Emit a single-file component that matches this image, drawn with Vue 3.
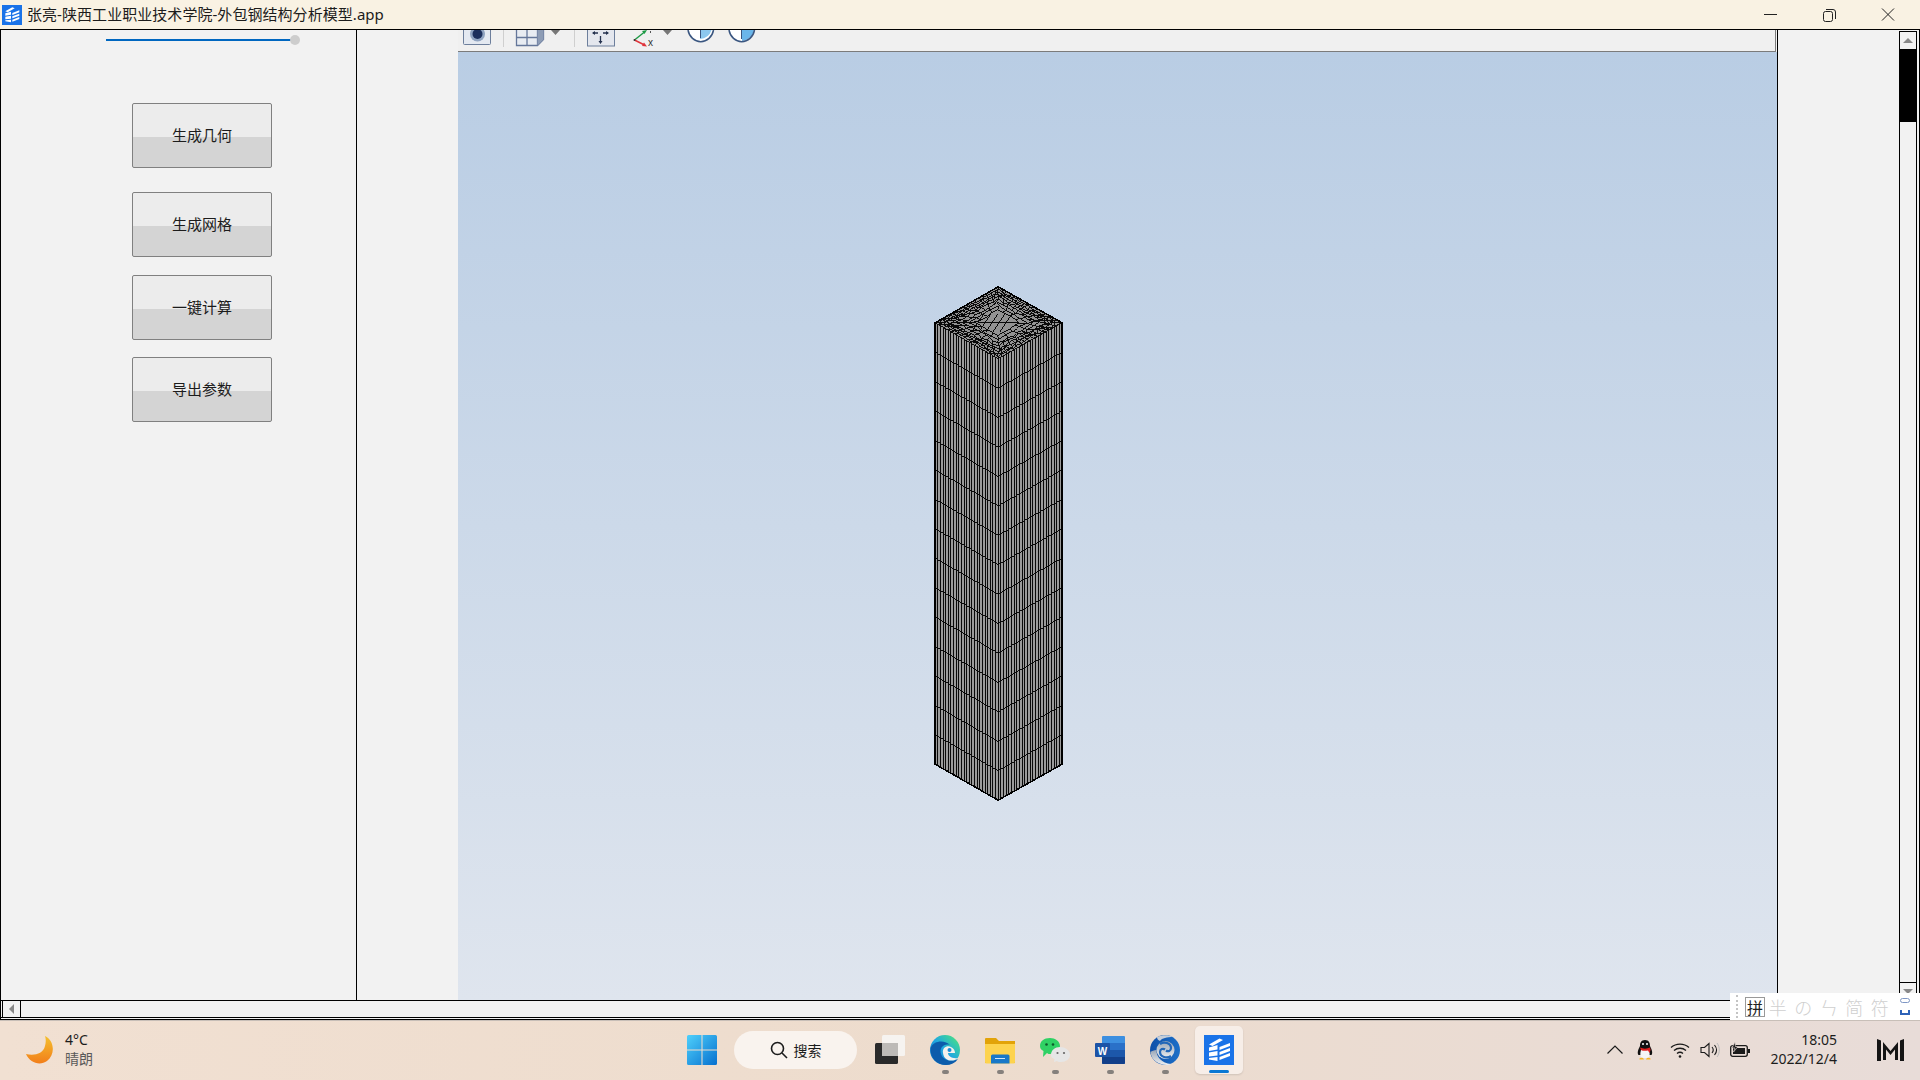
<template>
  <div class="app">
    <div class="titlebar">
      <svg class="title-icon" viewBox="0 0 30 30">
        <rect width="30" height="30" fill="#1a73e8" />
        <path v-for="d in shelfPaths" :key="d" :d="d" fill="#fff" />
      </svg>
      <span class="title-text">张亮-陕西工业职业技术学院-外包钢结构分析模型.app</span>
      <div class="win-controls">
        <svg viewBox="0 0 58 16"><path d="M22 7.5h13" stroke="#222" fill="none" /></svg>
        <svg viewBox="0 0 58 16">
          <rect x="22.5" y="4.5" width="9" height="10" rx="2" stroke="#222" fill="none" />
          <path d="M25 2.5h7a2.500 2.500 0 0 1 2.500 2.500v7" stroke="#222" fill="none" />
        </svg>
        <svg viewBox="0 0 58 16"><path d="M22 1.500l12 12M34 1.500l-12 12" stroke="#222" fill="none" /></svg>
      </div>
    </div>

    <div class="window">
      <div class="client">
        <aside class="side">
          <div class="slider"><span class="slider-line"></span><span class="slider-thumb"></span></div>
          <button v-for="b in buttons" :key="b" class="cmd">{{ b }}</button>
        </aside>

        <main class="viewer">
          <div class="toolbar">
            <svg class="toolbar-icons" viewBox="458 30 1317 21">
              <rect x="463.500" y="24" width="27" height="20.500" rx="1" fill="#e4e9f1" stroke="#6d7f9c" />
              <circle cx="477.500" cy="34" r="7.500" fill="#8fa3c0" />
              <circle cx="477.500" cy="34" r="5" fill="#1c2f5c" />
              <path d="M503.500 30v17M574.500 30v17" stroke="#cfcfcf" />
              <path d="M516.500 30v15.500h21l6-6v-10M516.500 37.500h21M527 30v15.500M537.500 30v15.500" fill="#e8ecf2" stroke="#65779a" stroke-width="1.300" />
              <path d="M537.500 45.500l6-6v-10h-6z" fill="#8d9cb5" />
              <path d="M551 30h9l-4.500 5zM663 30h9l-4.500 5z" fill="#777" />
              <rect x="587.500" y="24" width="27" height="22" fill="#e4e7ee" stroke="#6d7f9c" />
              <path d="M593 33h5M603 33h5M600.500 36v5" stroke="#24324f" stroke-width="1.300" />
              <path d="M592 33l3-2v4zM609 33l-3-2v4zM600.500 44l-2-3h4z" fill="#24324f" />
              <path d="M634.500 40l10-8" stroke="#1c9a45" stroke-width="1.500" />
              <path d="M647 30l-5 1 2.500 3z" fill="#1c9a45" />
              <path d="M634.500 40l10 5" stroke="#e0333a" stroke-width="1.500" />
              <path d="M647 46.500l-5-.5 2-3.500z" fill="#e0333a" />
              <circle cx="634.500" cy="40" r="1" fill="#333" />
              <text x="648" y="46" class="axis">x</text>
              <rect x="650" y="31" width="1" height="2" fill="#555" />
              <path d="M688 30a13 14.500 0 0 0 25.500 0z" fill="#fff" />
              <path d="M700 30h11.500a13 13 0 0 1-11.500 9z" fill="#8cc8ef" />
              <path d="M688 30a13 14.500 0 0 0 25.500 0" fill="none" stroke="#3a5680" stroke-width="1.500" />
              <path d="M700.500 30v8" stroke="#3a5680" />
              <path d="M729 30a13 14.500 0 0 0 25.500 0z" fill="#fff" />
              <path d="M742 30h12a13 13 0 0 1-12 11z" fill="#6ab6ea" />
              <path d="M729 30a13 14.500 0 0 0 25.500 0" fill="none" stroke="#3a5680" stroke-width="1.500" />
              <path d="M741.500 30v9" stroke="#3a5680" />
            </svg>
          </div>
          <svg class="scene" viewBox="458 51 1319 949" shape-rendering="crispEdges">
            <path d="M998 286L1062 322V764L998 800L935 764V322Z" fill="#9b9b9b" />
            <path d="M998 286L1062 322L998 358L935 322Z" fill="#939393" />
            <path :d="towerColumns" fill="none" stroke="#0a0a0a" stroke-width="1" />
            <path :d="towerBands" fill="none" stroke="#0a0a0a" stroke-width="1" />
            <path :d="topMesh" fill="none" stroke="#0a0a0a" stroke-width="1" />
            <path d="M998 286L1062 322V764L998 800L935 764V322Z" fill="none" stroke="#000" stroke-width="1.500" />
          </svg>
        </main>

        <div class="right-pane"></div>

        <div class="vscroll">
          <div class="vbtn"><span class="arrow-up"></span></div>
          <div class="vthumb"></div>
          <div class="vtrack"></div>
          <div class="vbtn vbtn-end"><span class="arrow-down"></span></div>
        </div>
      </div>

      <div class="hbar">
        <div class="hbtn"><span class="arrow-left"></span></div>
      </div>
    </div>

    <footer class="taskbar">
      <div class="weather">
        <svg class="moon" viewBox="0 0 28 28">
          <defs>
            <linearGradient id="moonGrad" x1="0" y1="0" x2="0" y2="1">
              <stop offset="0" stop-color="#f4c02e" />
              <stop offset="1" stop-color="#f27e1a" />
            </linearGradient>
          </defs>
          <path d="M19 0C28 4 30 18 21 25C14 30 4 27 0 18C8 20 17 18 19 10C20 6 20 3 19 0Z" fill="url(#moonGrad)" />
        </svg>
        <div class="weather-text">
          <div class="temp">4°C</div>
          <div class="sky">晴朗</div>
        </div>
      </div>

      <div class="task-group">
        <div class="task">
          <svg class="ico" viewBox="0 0 29 29">
            <defs>
              <linearGradient id="winGrad" x1="0" y1="0" x2="1" y2="1">
                <stop offset="0" stop-color="#4fd0fb" />
                <stop offset="1" stop-color="#0670cf" />
              </linearGradient>
            </defs>
            <path d="M0 1.500a1.500 1.500 0 0 1 1.500-1.500H14V14H0ZM15 0H27.500A1.500 1.500 0 0 1 29 1.500V14H15ZM0 15H14V29H1.500A1.500 1.500 0 0 1 0 27.500ZM15 15H29V27.500A1.500 1.500 0 0 1 27.500 29H15Z" fill="url(#winGrad)" />
          </svg>
        </div>
        <div class="search">
          <svg class="search-ico" viewBox="0 0 18 18">
            <circle cx="7.500" cy="7.500" r="6" fill="none" stroke="#1c1c1c" stroke-width="1.600" />
            <path d="M12 12l5 5" stroke="#1c1c1c" stroke-width="1.600" />
          </svg>
          <span>搜索</span>
        </div>
        <div class="task">
          <svg class="ico" viewBox="0 0 30 30">
            <rect x="0" y="8" width="23" height="21" rx="1.500" fill="#2a2a2a" />
            <rect x="7" y="0" width="23" height="21" rx="1.500" fill="#f6f3f0" />
            <rect x="7" y="8" width="16" height="13" fill="#bdbab7" />
          </svg>
        </div>
        <div class="task">
          <svg class="ico" viewBox="0 0 30 30">
            <defs>
              <linearGradient id="edgeGrad" x1="0" y1="1" x2="1" y2="0">
                <stop offset="0" stop-color="#0b6ec4" />
                <stop offset=".5" stop-color="#21a8e0" />
                <stop offset=".8" stop-color="#3cd1a0" />
                <stop offset="1" stop-color="#74de5a" />
              </linearGradient>
            </defs>
            <circle cx="15" cy="15" r="15" fill="url(#edgeGrad)" />
            <path d="M.5 13C0 24 8 30 16 30C21 30 25 28 28 24C22 27 13 26 11 19C9 13 14 8 20 10C15 5 4 5 .5 13Z" fill="#0c5cab" />
            <path d="M13 18C12 13 17 10 21 12C24 13.500 25 16 25 18L18 18C18 21 22 24 28 23C24 27 14 27 13 18Z" fill="#f4f1ed" />
            <circle cx="19.500" cy="15" r="2" fill="#1b8cd6" />
          </svg>
        </div>
        <div class="task">
          <svg class="ico" viewBox="0 0 30 28">
            <path d="M0 3a1 1 0 0 1 1-1H11L14 5H30V27H0Z" fill="#e2a309" />
            <path d="M0 8H30V26a1.500 1.500 0 0 1-1.500 1.500H1.500A1.500 1.500 0 0 1 0 26Z" fill="#fdd34e" />
            <path d="M6 20a1.500 1.500 0 0 1 1.500-1.500H23a1.500 1.500 0 0 1 1.500 1.500V27.500H6Z" fill="#1878c8" />
            <path d="M10 22.500H20" stroke="#cfe6f8" />
          </svg>
        </div>
        <div class="task">
          <svg class="ico" viewBox="0 0 30 26">
            <path d="M0 9C0 4 4 1 10 1C15 1 20 4 20 9C20 14 15 17 10 17C9 17 8 17 7 16L3 20L3.500 14C1 13 0 11 0 9Z" fill="#2fd164" />
            <circle cx="6.500" cy="7.500" r="1.300" fill="#0d5a2b" />
            <circle cx="13" cy="7.500" r="1.300" fill="#0d5a2b" />
            <path d="M11 18C11 13 15 10 20 10C25 10 30 13 30 18C30 22 26 25 21 25C19 25 18 25 17 24L14 25L14.500 22C12 21 11 20 11 18Z" fill="#e6e6e6" />
            <circle cx="17.500" cy="16" r="1.100" fill="#666" />
            <circle cx="24" cy="16" r="1.100" fill="#666" />
          </svg>
        </div>
        <div class="task">
          <svg class="ico" viewBox="0 0 30 28">
            <rect x="7" y="0" width="23" height="28" rx="1" fill="#3d8fe0" />
            <rect x="7" y="7" width="23" height="7" fill="#2a70c8" />
            <rect x="7" y="14" width="23" height="7" fill="#1c57aa" />
            <path d="M7 21H30V27a1 1 0 0 1-1 1H8a1 1 0 0 1-1-1Z" fill="#123f8a" />
            <rect x="0" y="7" width="15" height="14" rx="1" fill="#1c53a6" />
            <text x="7.500" y="18.500" class="word-w">W</text>
          </svg>
        </div>
        <div class="task">
          <svg class="ico" viewBox="0 0 30 30">
            <defs>
              <linearGradient id="swirlGrad" x1="0" y1="0" x2="1" y2="0">
                <stop offset="0" stop-color="#0f4fa8" />
                <stop offset="1" stop-color="#1c6fc8" />
              </linearGradient>
              <linearGradient id="silverGrad" x1="0" y1="0" x2="0" y2="1">
                <stop offset="0" stop-color="#9aa6b6" />
                <stop offset="1" stop-color="#eef0f2" />
              </linearGradient>
            </defs>
            <circle cx="15" cy="15" r="15" fill="url(#swirlGrad)" />
            <path d="M.5 17C1 25 9 30 17 30C19 30 20 29.500 21 29C12 28 6 22 6.500 15C4 15 2 16 .5 17Z" fill="url(#silverGrad)" />
            <path d="M7 2C12 -.5 19 -.5 23 2C17 2 12 3 10 6C8 5 7 4 7 2Z" fill="#c6ced8" />
            <circle cx="15.500" cy="15" r="9" fill="url(#silverGrad)" />
            <path d="M10 9C14 6 21 8 21 13C21 16 18 17 16 15.500M21 21C17 24 10 22 10 17C10 14 13 13 15 14.500" fill="none" stroke="#2267b8" stroke-width="2.200" />
          </svg>
        </div>
        <div class="task active">
          <svg class="ico" viewBox="0 0 30 30">
            <rect width="30" height="30" fill="#1a73e8" />
            <path v-for="d in shelfPaths" :key="d" :d="d" fill="#fff" />
          </svg>
          <span class="active-bar"></span>
        </div>
        <span v-for="x in runDots" :key="x" class="run-dot" :style="{ left: x + 'px' }"></span>
      </div>

      <div class="tray">
        <svg class="tray-chevron" viewBox="0 0 16 9"><path d="M.5 8.500L8 1l7.500 7.500" fill="none" stroke="#1a1a1a" stroke-width="1.200" /></svg>
        <svg class="tray-qq" viewBox="0 0 16 20">
          <path d="M8 0C4 0 3 3 3 6C1 10 0 13 1.500 15H14.500C16 13 15 10 13 6C13 3 12 0 8 0Z" fill="#111" />
          <path d="M4 10C3 13 3 17 5 18H11C13 17 13 13 12 10Z" fill="#f5f5f5" />
          <path d="M3 7.500C6 9 10 9 13 7.500L13.500 10L12.500 13L11 10.500C8 11 6 11 4 10Z" fill="#e0201f" />
          <path d="M2.500 18.500C4 17 6.500 17.500 7 19.500H2.500ZM9 19.500C9.500 17.500 12 17 13.500 18.500V19.500Z" fill="#f5b321" />
          <circle cx="6" cy="4" r="1" fill="#fff" /><circle cx="10" cy="4" r="1" fill="#fff" />
        </svg>
        <svg class="tray-wifi" viewBox="0 0 20 16">
          <path d="M1 5.500C6 1 14 1 19 5.500M4 8.500C7.500 5.500 12.500 5.500 16 8.500M7 11.500C8.800 10 11.200 10 13 11.500" fill="none" stroke="#1a1a1a" stroke-width="1.300" />
          <circle cx="10" cy="14.500" r="1.300" fill="#1a1a1a" />
        </svg>
        <svg class="tray-sound" viewBox="0 0 20 16">
          <path d="M1 5.500H4.500L9 1.500V14.500L4.500 10.500H1Z" fill="none" stroke="#1a1a1a" stroke-width="1.100" />
          <path d="M12 5C13.500 6.800 13.500 9.200 12 11M14.500 3C17 6 17 10 14.500 13" fill="none" stroke="#1a1a1a" stroke-width="1.100" />
          <path d="M17 1C20 5 20 11 17 15" fill="none" stroke="#bbb" />
        </svg>
        <svg class="tray-battery" viewBox="0 0 20 16">
          <rect x=".7" y="3.700" width="16.600" height="10.600" rx="2" fill="none" stroke="#1a1a1a" stroke-width="1.300" />
          <rect x="3" y="6" width="12" height="6" fill="#1a1a1a" />
          <rect x="18" y="7" width="2" height="4" fill="#1a1a1a" />
          <path d="M5 0L2 6H5L3.500 10L8 4.500H5.500Z" fill="#1a1a1a" stroke="#eadcd6" stroke-width=".6" />
        </svg>
        <div class="clock">
          <div>18:05</div>
          <div>2022/12/4</div>
        </div>
        <svg class="tray-logo" viewBox="0 0 27 22">
          <path d="M0 0L4 1.500V22H0ZM27 0L23 1.500V22H27ZM6 3L13.500 12L21 3V21H18V10.500L13.500 16L9 10.500V21H6Z" fill="#141414" />
        </svg>
      </div>
    </footer>

    <div class="ime">
      <span class="ime-grip"></span>
      <span class="ime-main">拼</span>
      <span v-for="g in imeGlyphs" :key="g" class="ime-item">{{ g }}</span>
      <span class="ime-last">
        <i class="ime-o"></i>
        <i class="ime-u"></i>
      </span>
    </div>
  </div>
</template>

<script setup>
const buttons = ["生成几何", "生成网格", "一键计算", "导出参数"];
const imeGlyphs = ["半", "の", "ㄣ", "简", "符"];
const runDots = [268, 323, 378, 433, 488];

const shelfPaths = [
  "M5 9.500L15.500 3.500L19 5L8.500 11Z",
  "M5 12.500L13.500 10V14.500L5 16Z",
  "M5 17.500L13.500 16V20.500L5 21.500Z",
  "M5 23L13.500 22V26L5 24.500Z",
  "M15.500 12L26 8V11L15.500 15Z",
  "M15.500 17L26 13V16L15.500 20Z",
  "M15.500 22L26 18V21L15.500 25Z",
];

// tower faces: 15 storeys, 24 columns on each side
const towerBands = (() => {
  const storeys = 15;
  const rise = (800 - 358) / storeys;
  let d = "M935 322L998 358L1062 322";
  for (let k = 1; k < storeys; k++) {
    const y = 322 + k * rise;
    d += `M935 ${y.toFixed(1)}L998 ${(y + 36).toFixed(1)}L1062 ${y.toFixed(1)}`;
  }
  return d;
})();

const towerColumns = (() => {
  const cols = 24;
  let d = "";
  for (let i = 0; i <= cols; i++) {
    const lx = 935 + (63 * i) / cols;
    const ly = 322 + (36 * i) / cols;
    d += `M${lx.toFixed(1)} ${ly.toFixed(1)}V${(ly + 442).toFixed(1)}`;
    const rx = 998 + (64 * i) / cols;
    const ry = 358 - (36 * i) / cols;
    d += `M${rx.toFixed(1)} ${ry.toFixed(1)}V${(ry + 442).toFixed(1)}`;
  }
  return d;
})();

// free mesh on the roof, rough on purpose: fine cells outside, large cells in the middle
const topMesh = (() => {
  let seed = 4711;
  const rnd = () => {
    seed = (seed * 16807) % 2147483647;
    return seed / 2147483647 - 0.5;
  };
  const cx = 998;
  const cy = 322;
  const corners = [[63, 0], [0, 36], [-63, 0], [0, -36]];
  const onDiamond = (u, s) => {
    const e = Math.floor(u) % 4;
    const f = u - Math.floor(u);
    const a = corners[e];
    const b = corners[(e + 1) % 4];
    return [cx + s * (a[0] + (b[0] - a[0]) * f), cy + s * (a[1] + (b[1] - a[1]) * f)];
  };
  const rings = [0.36, 0.47, 0.57, 0.66, 0.74, 0.81, 0.87, 0.93, 1];
  const n = 64;
  const pts = rings.map((s) =>
    Array.from({ length: n }, (_, i) => {
      const p = onDiamond((i / n) * 4, s);
      const j = s === 1 ? 0 : 3;
      return [p[0] + rnd() * j, p[1] + rnd() * j * 0.6];
    })
  );
  let d = "";
  pts.forEach((ring, r) => {
    const step = rings[r] < 0.5 ? 4 : rings[r] < 0.7 ? 2 : 1;
    for (let i = 0; i < n; i += step) {
      const p = ring[i];
      const q = ring[(i + step) % n];
      d += `M${p[0].toFixed(1)} ${p[1].toFixed(1)}L${q[0].toFixed(1)} ${q[1].toFixed(1)}`;
      if (r + 1 < pts.length) {
        const o = pts[r + 1][i];
        d += `M${p[0].toFixed(1)} ${p[1].toFixed(1)}L${o[0].toFixed(1)} ${o[1].toFixed(1)}`;
      }
    }
  });
  for (let k = -2; k <= 2; k++) {
    d += `M${986 + k * 7} 331L${998 + k * 7} 313`;
  }
  d += "M978 322H1018";
  return d;
})();
</script>

<style>
html,
body {
  margin: 0;
  padding: 0;
  overflow: hidden;
}
</style>

<style scoped>
.app {
  position: relative;
  width: 1920px;
  height: 1080px;
  display: flex;
  flex-direction: column;
  overflow: hidden;
  font-family: "Noto Sans", "Noto Sans CJK SC", sans-serif;
  color: #1c1c1c;
}

.titlebar {
  height: 29px;
  flex: none;
  display: flex;
  align-items: center;
  background: #f9f2e3;
  padding-left: 2px;
}

.title-icon {
  width: 20px;
  height: 20px;
}

.title-text {
  margin-left: 5px;
  font-size: 15px;
  line-height: 29px;
  letter-spacing: 0.05px;
  white-space: nowrap;
}

.win-controls {
  margin-left: auto;
  display: flex;
  gap: 0;
}

.win-controls svg {
  width: 58px;
  height: 16px;
  margin-right: 1px;
  position: relative;
  left: -1px;
}

.window {
  height: 991px;
  flex: none;
  box-sizing: border-box;
  border: 1px solid #000;
  background: #f2f2f2;
  display: flex;
  flex-direction: column;
}

.client {
  flex: 1;
  min-height: 0;
  display: flex;
}

.side {
  width: 356px;
  flex: none;
  box-sizing: border-box;
  border-right: 1px solid #000;
  padding-left: 131px;
  display: flex;
  flex-direction: column;
  align-items: flex-start;
}

.slider {
  position: relative;
  height: 73px;
  width: 220px;
}

.slider-line {
  position: absolute;
  left: -26px;
  top: 9px;
  width: 185px;
  height: 2px;
  background: #0067c0;
}

.slider-thumb {
  position: absolute;
  left: 158px;
  top: 5px;
  width: 10px;
  height: 10px;
  border-radius: 50%;
  background: #cdcdcd;
}

.cmd {
  width: 140px;
  height: 65px;
  flex: none;
  padding: 0 0 3px;
  box-sizing: border-box;
  border: 1px solid #808080;
  border-radius: 2px;
  background: linear-gradient(#ececec 0 33px, #d4d4d4 33px 100%);
  font: 15px "Noto Sans CJK SC", sans-serif;
  color: #1c1c1c;
}

.cmd:nth-of-type(2) {
  margin-top: 24px;
}

.cmd:nth-of-type(3) {
  margin-top: 18px;
}

.cmd:nth-of-type(4) {
  margin-top: 17px;
}

.viewer {
  width: 1319px;
  flex: none;
  margin-left: 101px;
  border-right: 0;
  display: flex;
  flex-direction: column;
}

.toolbar {
  height: 21px;
  flex: none;
  width: 1317px;
  box-sizing: content-box;
  background: #f0f0f0;
  border-right: 1px solid #7b7b7b;
  border-bottom: 1px solid #7b7b7b;
}

.toolbar-icons {
  display: block;
  width: 1317px;
  height: 21px;
}

.axis {
  font: 10px "Liberation Sans", sans-serif;
  fill: #333;
}

.scene {
  display: block;
  width: 1319px;
  flex: 1;
  min-height: 0;
  background: linear-gradient(#b9cde4, #dfe5ee);
}

.right-pane {
  width: 122px;
  flex: none;
  border-left: 1px solid #000;
  box-sizing: border-box;
}

.vscroll {
  width: 18px;
  flex: none;
  box-sizing: border-box;
  border: 1px solid #000;
  border-bottom: 0;
  margin-top: 1px;
  display: flex;
  flex-direction: column;
}

.vbtn {
  height: 17px;
  flex: none;
  display: flex;
  align-items: center;
  justify-content: center;
}

.vbtn-end {
  border-top: 1px solid #000;
}

.vthumb {
  height: 73px;
  flex: none;
  background: #000;
}

.vtrack {
  flex: 1;
}

.arrow-up {
  border: 5px solid transparent;
  border-top: 0;
  border-bottom: 5px solid #888;
}

.arrow-down {
  border: 5px solid transparent;
  border-bottom: 0;
  border-top: 5px solid #888;
}

.hbar {
  height: 18px;
  flex: none;
  box-sizing: border-box;
  margin-bottom: 1px;
  border-top: 1px solid #000;
  border-bottom: 1px solid #000;
  padding-left: 1px;
  display: flex;
}

.hbtn {
  width: 19px;
  box-sizing: border-box;
  border-left: 1px solid #000;
  border-right: 1px solid #000;
  display: flex;
  align-items: center;
  justify-content: center;
}

.arrow-left {
  border: 5px solid transparent;
  border-left: 0;
  border-right: 5px solid #888;
}

.taskbar {
  height: 60px;
  flex: none;
  box-sizing: border-box;
  border-top: 1px solid #c8bfb8;
  padding-bottom: 2px;
  background: linear-gradient(90deg, #f1e0d2, #eddccd 50%, #e8dcd8);
  display: flex;
  align-items: center;
}

.weather {
  width: 674px;
  flex: none;
  box-sizing: border-box;
  padding-left: 26px;
  display: flex;
  align-items: center;
  gap: 11px;
}

.moon {
  width: 28px;
  height: 28px;
}

.weather-text {
  font-size: 14px;
  line-height: 19px;
  margin-top: -2px;
}

.sky {
  color: #5a5a5a;
}

.task-group {
  position: relative;
  display: flex;
  align-items: center;
}

.task {
  position: relative;
  width: 55px;
  height: 48px;
  flex: none;
  display: flex;
  align-items: center;
  justify-content: center;
}

.ico {
  width: 30px;
  height: 30px;
}

.word-w {
  font: bold 10px "Liberation Sans", sans-serif;
  fill: #fff;
  text-anchor: middle;
}

.search {
  width: 123px;
  height: 38px;
  flex: none;
  box-sizing: border-box;
  margin: 0 5px;
  border-radius: 19px;
  background: #f9f3ee;
  display: flex;
  align-items: center;
  justify-content: center;
  gap: 6px;
  font: 14px "Noto Sans CJK SC", sans-serif;
}

.search-ico {
  width: 18px;
  height: 18px;
}

.active {
  width: 48px;
  margin-left: 3px;
  border-radius: 5px;
  background: #f7eee8;
  box-shadow: 0 1px 2px rgba(0, 0, 0, 0.12);
}

.active-bar {
  position: absolute;
  left: 14px;
  bottom: 1px;
  width: 20px;
  height: 3px;
  border-radius: 2px;
  background: #0a78d4;
}

.run-dot {
  position: absolute;
  bottom: 0;
  width: 7px;
  height: 4px;
  border-radius: 2px;
  background: #85807c;
}

.tray {
  margin-left: auto;
  padding-right: 16px;
  display: flex;
  align-items: center;
  font-size: 14px;
}

.tray-chevron {
  width: 16px;
  height: 9px;
  margin-right: 14px;
}

.tray-qq {
  width: 16px;
  height: 20px;
  margin-right: 17px;
}

.tray-wifi {
  width: 20px;
  height: 16px;
  margin-right: 10px;
}

.tray-sound {
  width: 20px;
  height: 16px;
  margin-right: 10px;
}

.tray-battery {
  width: 20px;
  height: 16px;
}

.clock {
  width: 87px;
  text-align: right;
  line-height: 19px;
  margin-top: -2px;
}

.tray-logo {
  width: 27px;
  height: 22px;
  margin-left: 40px;
}

.ime {
  position: absolute;
  left: 1730px;
  top: 993px;
  width: 190px;
  height: 27px;
  background: #fff;
  display: flex;
  align-items: center;
}

.ime-grip {
  width: 0;
  height: 23px;
  margin-left: 6px;
  border-left: 2px dotted #c4c4c4;
}

.ime-main {
  width: 20px;
  height: 20px;
  margin-left: 7px;
  box-sizing: border-box;
  border: 1px solid #999;
  font: 16px/18px "Noto Sans CJK SC", sans-serif;
  text-align: center;
  color: #222;
}

.ime-item {
  width: 25.500px;
  font: 300 18px "Noto Sans CJK SC", sans-serif;
  text-align: center;
  color: #cfcfcf;
}

.ime-item:first-of-type {
  margin-left: 8px;
}

.ime-last {
  margin-left: 7px;
  width: 10px;
  display: flex;
  flex-direction: column;
  align-items: center;
  gap: 7px;
}

.ime-o {
  width: 10px;
  height: 5px;
  box-sizing: border-box;
  border: 1.500px solid #7f97c4;
  border-radius: 3px;
}

.ime-u {
  width: 10px;
  height: 5px;
  box-sizing: border-box;
  border: 2px solid #2e63b8;
  border-top: 0;
}
</style>
